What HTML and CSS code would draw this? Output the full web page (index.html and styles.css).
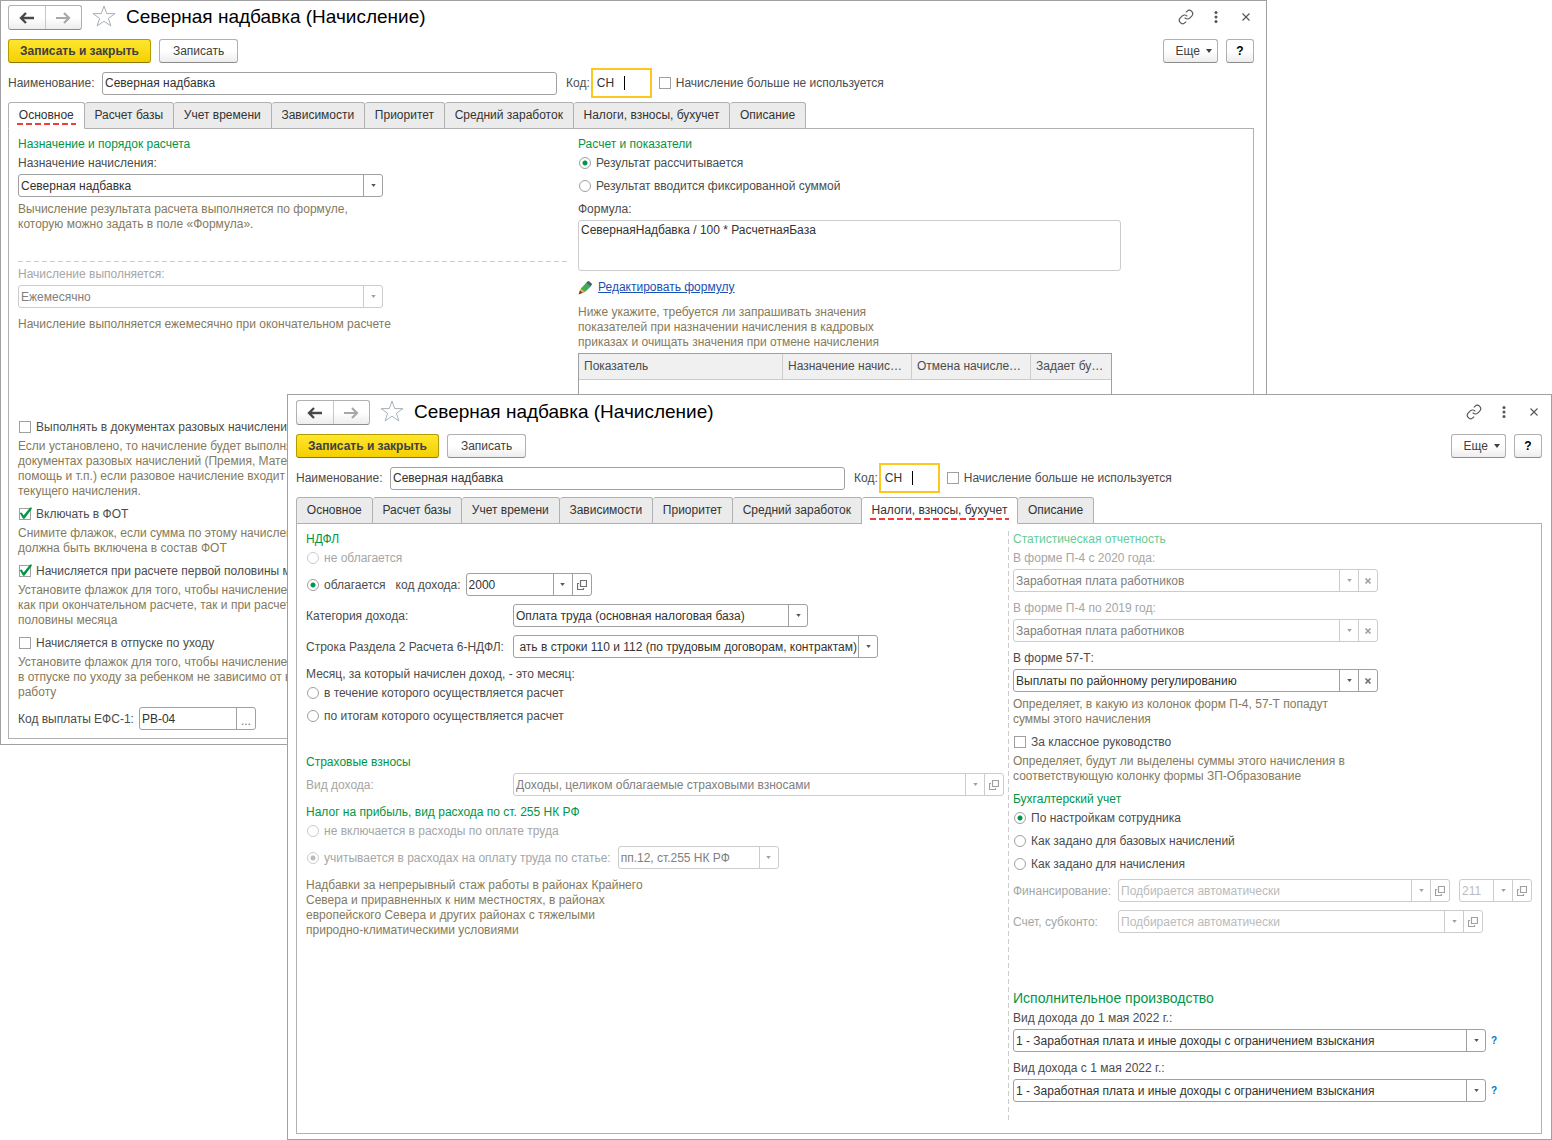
FILE: index.html
```html
<!DOCTYPE html>
<html lang="ru">
<head>
<meta charset="utf-8">
<meta name="viewport" content="width=device-width, initial-scale=1">
<title>Северная надбавка (Начисление)</title>
<link rel="stylesheet" href="styles.css">
</head>
<body>
<svg class="sprite" aria-hidden="true">
  <symbol id="i-back" viewBox="0 0 16 12"><path d="M7 1 2 6l5 5M2 6h13" fill="none" stroke="currentColor" stroke-width="2.4"/></symbol>
  <symbol id="i-forward" viewBox="0 0 16 12"><path d="m9 1 5 5-5 5M14 6H1" fill="none" stroke="currentColor" stroke-width="2.200"/></symbol>
  <symbol id="i-star" viewBox="0 0 24 22"><path d="m12 1 2.700 7.600h8.300l-6.600 4.700 2.500 7.700-6.900-4.800-6.900 4.800 2.500-7.700L1 8.600h8.300z" fill="none" stroke="currentColor" stroke-width="1"/></symbol>
  <symbol id="i-link" viewBox="0 0 24 24"><path d="M10 13a5 5 0 0 0 7.540.54l3-3a5 5 0 0 0-7.070-7.070l-1.720 1.710M14 11a5 5 0 0 0-7.540-.54l-3 3a5 5 0 0 0 7.070 7.070l1.710-1.710" fill="none" stroke="currentColor" stroke-width="1.700"/></symbol>
  <symbol id="i-dots" viewBox="0 0 16 16"><g fill="currentColor"><circle cx="8" cy="3.500" r="1.500"/><circle cx="8" cy="8" r="1.500"/><circle cx="8" cy="12.500" r="1.500"/></g></symbol>
  <symbol id="i-close" viewBox="0 0 16 16"><path d="m4.500 4.500 7 7m0-7-7 7" fill="none" stroke="currentColor" stroke-width="1.100"/></symbol>
  <symbol id="i-caret" viewBox="0 0 6 4"><path d="M0 0h6L3 4z" fill="currentColor"/></symbol>
  <symbol id="i-open" viewBox="0 0 10 10"><path d="M3.500.5h6v6h-6zM2 3.500H.5v6h6V8" fill="none" stroke="currentColor" stroke-width="1.200"/></symbol>
  <symbol id="i-clear" viewBox="0 0 8 8"><path d="m1.500 1.500 5 5m0-5-5 5" fill="none" stroke="currentColor" stroke-width="1.700"/></symbol>
  <symbol id="i-pencil" viewBox="0 0 14 14"><path d="m.5 13.500 1.500-4.500L5.500 11.500z" fill="#5b4632"/><path d="m1.700 9.300 1.500-2.300 4 3.600-2.200 1.700z" fill="#f0a848"/><path d="m2.800 7.500 5.700-6 4.300 4L7 11z" fill="#3fae5a"/><path d="m8.300 1.700 1.500-1.400q.7-.5 1.500.1l2.300 2.200q.7.800.1 1.500l-1.300 1.500z" fill="#4b5d6b"/></symbol>
</svg>

<main class="desktop">

  <section class="window window--back" aria-label="Северная надбавка, основное">
    <header class="titlebar">
      <div class="nav">
        <button class="nav__button" type="button" aria-label="Назад"><svg width="16" height="12"><use href="#i-back"/></svg></button>
        <button class="nav__button nav__button--off" type="button" aria-label="Вперед"><svg width="16" height="12"><use href="#i-forward"/></svg></button>
      </div>
      <button class="icon-button icon-button--star" type="button" aria-label="В избранное"><svg width="24" height="22"><use href="#i-star"/></svg></button>
      <h1 class="titlebar__title">Северная надбавка (Начисление)</h1>
      <div class="titlebar__tools">
        <button class="icon-button" type="button" aria-label="Ссылка"><svg width="16" height="16"><use href="#i-link"/></svg></button>
        <button class="icon-button" type="button" aria-label="Меню"><svg width="16" height="16"><use href="#i-dots"/></svg></button>
        <button class="icon-button" type="button" aria-label="Закрыть"><svg width="16" height="16"><use href="#i-close"/></svg></button>
      </div>
    </header>
    <div class="commands">
      <button class="button button--primary" type="button">Записать и закрыть</button>
      <button class="button" type="button">Записать</button>
      <span class="commands__space"></span>
      <button class="button button--more" type="button">Еще <svg width="6" height="4"><use href="#i-caret"/></svg></button>
      <button class="button button--help" type="button">?</button>
    </div>
    <div class="identity">
      <label class="identity__label" for="b-name">Наименование:</label>
      <input class="text-field identity__name" id="b-name" type="text" value="Северная надбавка">
      <label for="b-code">Код:</label>
      <span class="code"><input class="code__input" id="b-code" type="text" value="СН"><span class="code__caret"></span></span>
      <label class="choice"><input type="checkbox">Начисление больше не используется</label>
    </div>
    <nav class="tabs">
      <button class="tab tab--active" type="button"><span class="tab__text">Основное</span></button>
      <button class="tab" type="button">Расчет базы</button>
      <button class="tab" type="button">Учет времени</button>
      <button class="tab" type="button">Зависимости</button>
      <button class="tab" type="button">Приоритет</button>
      <button class="tab" type="button">Средний заработок</button>
      <button class="tab" type="button">Налоги, взносы, бухучет</button>
      <button class="tab" type="button">Описание</button>
    </nav>
    <div class="panel panel--main">
      <div class="stack">
        <h2 class="heading">Назначение и порядок расчета</h2>
        <label class="near" for="b-purpose">Назначение начисления:</label>
        <div class="combo combo--medium near"><select id="b-purpose"><option>Северная надбавка</option></select><span class="combo__cell combo__cell--caret"><svg width="6" height="4"><use href="#i-caret"/></svg></span></div>
        <p class="hint near">Вычисление результата расчета выполняется по формуле,<br>которую можно задать в поле «Формула».</p>
        <hr class="divider">
        <label class="near muted" for="b-period">Начисление выполняется:</label>
        <div class="combo combo--medium combo--off near"><select id="b-period" disabled><option>Ежемесячно</option></select><span class="combo__cell combo__cell--caret"><svg width="6" height="4"><use href="#i-caret"/></svg></span></div>
        <p class="hint">Начисление выполняется ежемесячно при окончательном расчете</p>
        <label class="choice choice--spaced"><input type="checkbox">Выполнять в документах разовых начислений</label>
        <p class="hint near">Если установлено, то начисление будет выполняться в<br>документах разовых начислений (Премия, Материальная<br>помощь и т.п.) если разовое начисление входит в базу<br>текущего начисления.</p>
        <label class="choice"><input type="checkbox" checked>Включать в ФОТ</label>
        <p class="hint near">Снимите флажок, если сумма по этому начислению не<br>должна быть включена в состав ФОТ</p>
        <label class="choice"><input type="checkbox" checked>Начисляется при расчете первой половины месяца</label>
        <p class="hint near">Установите флажок для того, чтобы начисление выполнялось<br>как при окончательном расчете, так и при расчете первой<br>половины месяца</p>
        <label class="choice"><input type="checkbox">Начисляется в отпуске по уходу</label>
        <p class="hint near">Установите флажок для того, чтобы начисление выполнялось<br>в отпуске по уходу за ребенком не зависимо от выхода на<br>работу</p>
        <div class="row">
          <label for="b-efs">Код выплаты ЕФС-1:</label>
          <div class="combo combo--code"><input id="b-efs" type="text" value="РВ-04"><button class="combo__cell combo__cell--dots" type="button" aria-label="Выбрать">...</button></div>
        </div>
      </div>
      <div class="stack">
        <h2 class="heading">Расчет и показатели</h2>
        <label class="choice near"><input type="radio" name="b-result" checked>Результат рассчитывается</label>
        <label class="choice"><input type="radio" name="b-result">Результат вводится фиксированной суммой</label>
        <label for="b-formula">Формула:</label>
        <textarea class="formula near" id="b-formula">СевернаяНадбавка / 100 * РасчетнаяБаза</textarea>
        <div class="edit"><svg width="14" height="14"><use href="#i-pencil"/></svg><a class="edit__link" href="#formula">Редактировать формулу</a></div>
        <p class="hint">Ниже укажите, требуется ли запрашивать значения<br>показателей при назначении начисления в кадровых<br>приказах и очищать значения при отмене начисления</p>
        <table class="grid near">
          <thead><tr><th class="grid__name">Показатель</th><th class="grid__assign">Назначение начисления</th><th class="grid__cancel">Отмена начисления</th><th>Задает бухучет</th></tr></thead>
          <tbody><tr><td></td><td></td><td></td><td></td></tr></tbody>
        </table>
      </div>
    </div>
  </section>

  <section class="window window--front" aria-label="Северная надбавка, налоги, взносы, бухучет">
    <header class="titlebar">
      <div class="nav">
        <button class="nav__button" type="button" aria-label="Назад"><svg width="16" height="12"><use href="#i-back"/></svg></button>
        <button class="nav__button nav__button--off" type="button" aria-label="Вперед"><svg width="16" height="12"><use href="#i-forward"/></svg></button>
      </div>
      <button class="icon-button icon-button--star" type="button" aria-label="В избранное"><svg width="24" height="22"><use href="#i-star"/></svg></button>
      <h1 class="titlebar__title">Северная надбавка (Начисление)</h1>
      <div class="titlebar__tools">
        <button class="icon-button" type="button" aria-label="Ссылка"><svg width="16" height="16"><use href="#i-link"/></svg></button>
        <button class="icon-button" type="button" aria-label="Меню"><svg width="16" height="16"><use href="#i-dots"/></svg></button>
        <button class="icon-button" type="button" aria-label="Закрыть"><svg width="16" height="16"><use href="#i-close"/></svg></button>
      </div>
    </header>
    <div class="commands">
      <button class="button button--primary" type="button">Записать и закрыть</button>
      <button class="button" type="button">Записать</button>
      <span class="commands__space"></span>
      <button class="button button--more" type="button">Еще <svg width="6" height="4"><use href="#i-caret"/></svg></button>
      <button class="button button--help" type="button">?</button>
    </div>
    <div class="identity">
      <label class="identity__label" for="f-name">Наименование:</label>
      <input class="text-field identity__name" id="f-name" type="text" value="Северная надбавка">
      <label for="f-code">Код:</label>
      <span class="code"><input class="code__input" id="f-code" type="text" value="СН"><span class="code__caret"></span></span>
      <label class="choice"><input type="checkbox">Начисление больше не используется</label>
    </div>
    <nav class="tabs">
      <button class="tab" type="button">Основное</button>
      <button class="tab" type="button">Расчет базы</button>
      <button class="tab" type="button">Учет времени</button>
      <button class="tab" type="button">Зависимости</button>
      <button class="tab" type="button">Приоритет</button>
      <button class="tab" type="button">Средний заработок</button>
      <button class="tab tab--active" type="button"><span class="tab__text">Налоги, взносы, бухучет</span></button>
      <button class="tab" type="button">Описание</button>
    </nav>
    <div class="panel panel--taxes">
      <div class="stack">
        <h2 class="heading">НДФЛ</h2>
        <label class="choice choice--off near"><input type="radio" name="f-ndfl" disabled>не облагается</label>
        <div class="row">
          <label class="choice"><input type="radio" name="f-ndfl" checked>облагается</label>
          <label class="row__after" for="f-income">код дохода:</label>
          <div class="combo combo--income"><select id="f-income"><option>2000</option></select><span class="combo__cell combo__cell--caret"><svg width="6" height="4"><use href="#i-caret"/></svg></span><button class="combo__cell" type="button" aria-label="Открыть"><svg width="10" height="10"><use href="#i-open"/></svg></button></div>
        </div>
        <div class="row">
          <label class="row__label" for="f-category">Категория дохода:</label>
          <div class="combo combo--category"><select id="f-category"><option>Оплата труда (основная налоговая база)</option></select><span class="combo__cell combo__cell--caret"><svg width="6" height="4"><use href="#i-caret"/></svg></span></div>
        </div>
        <div class="row">
          <label class="row__label" for="f-line">Строка Раздела 2 Расчета 6-НДФЛ:</label>
          <div class="combo combo--medium combo--tail"><select id="f-line"><option>ать в строки 110 и 112 (по трудовым договорам, контрактам)&lrm;</option></select><span class="combo__cell combo__cell--caret"><svg width="6" height="4"><use href="#i-caret"/></svg></span></div>
        </div>
        <p>Месяц, за который начислен доход, - это месяц:</p>
        <label class="choice near"><input type="radio" name="f-month">в течение которого осуществляется расчет</label>
        <label class="choice"><input type="radio" name="f-month">по итогам которого осуществляется расчет</label>
        <h2 class="heading heading--insurance">Страховые взносы</h2>
        <div class="row near">
          <label class="row__label muted" for="f-kind">Вид дохода:</label>
          <div class="combo combo--off combo--fill"><select id="f-kind" disabled><option>Доходы, целиком облагаемые страховыми взносами</option></select><span class="combo__cell combo__cell--caret"><svg width="6" height="4"><use href="#i-caret"/></svg></span><button class="combo__cell" type="button" aria-label="Открыть" disabled><svg width="10" height="10"><use href="#i-open"/></svg></button></div>
        </div>
        <h2 class="heading">Налог на прибыль, вид расхода по ст. 255 НК РФ</h2>
        <label class="choice choice--off near"><input type="radio" name="f-profit" disabled>не включается в расходы по оплате труда</label>
        <div class="row row--wide">
          <label class="choice choice--off"><input type="radio" name="f-profit" checked disabled>учитывается в расходах на оплату труда по статье:</label>
          <div class="combo combo--off combo--article"><select aria-label="Статья" disabled><option>пп.12, ст.255 НК РФ</option></select><span class="combo__cell combo__cell--caret"><svg width="6" height="4"><use href="#i-caret"/></svg></span></div>
        </div>
        <p class="hint">Надбавки за непрерывный стаж работы в районах Крайнего<br>Севера и приравненных к ним местностях, в районах<br>европейского Севера и других районах с тяжелыми<br>природно-климатическими условиями</p>
      </div>
      <div class="stack stack--ruled">
        <h2 class="heading heading--off">Статистическая отчетность</h2>
        <label class="near muted" for="f-p4new">В форме П-4 с 2020 года:</label>
        <div class="combo combo--medium combo--off near"><select id="f-p4new" disabled><option>Заработная плата работников</option></select><span class="combo__cell combo__cell--caret"><svg width="6" height="4"><use href="#i-caret"/></svg></span><button class="combo__cell" type="button" aria-label="Очистить" disabled><svg width="8" height="8"><use href="#i-clear"/></svg></button></div>
        <label class="muted" for="f-p4old">В форме П-4 по 2019 год:</label>
        <div class="combo combo--medium combo--off near"><select id="f-p4old" disabled><option>Заработная плата работников</option></select><span class="combo__cell combo__cell--caret"><svg width="6" height="4"><use href="#i-caret"/></svg></span><button class="combo__cell" type="button" aria-label="Очистить" disabled><svg width="8" height="8"><use href="#i-clear"/></svg></button></div>
        <label for="f-57t">В форме 57-Т:</label>
        <div class="combo combo--medium near"><select id="f-57t"><option>Выплаты по районному регулированию</option></select><span class="combo__cell combo__cell--caret"><svg width="6" height="4"><use href="#i-caret"/></svg></span><button class="combo__cell" type="button" aria-label="Очистить"><svg width="8" height="8"><use href="#i-clear"/></svg></button></div>
        <p class="hint near">Определяет, в какую из колонок форм П-4, 57-Т попадут<br>суммы этого начисления</p>
        <label class="choice"><input type="checkbox">За классное руководство</label>
        <p class="hint near">Определяет, будут ли выделены суммы этого начисления в<br>соответствующую колонку формы ЗП-Образование</p>
        <h2 class="heading">Бухгалтерский учет</h2>
        <label class="choice near"><input type="radio" name="f-account" checked>По настройкам сотрудника</label>
        <label class="choice"><input type="radio" name="f-account">Как задано для базовых начислений</label>
        <label class="choice"><input type="radio" name="f-account">Как задано для начисления</label>
        <div class="row">
          <label class="row__short muted" for="f-finance">Финансирование:</label>
          <div class="combo combo--off combo--empty combo--finance"><select id="f-finance" disabled><option>Подбирается автоматически</option></select><span class="combo__cell combo__cell--caret"><svg width="6" height="4"><use href="#i-caret"/></svg></span><button class="combo__cell" type="button" aria-label="Открыть" disabled><svg width="10" height="10"><use href="#i-open"/></svg></button></div>
          <div class="combo combo--off combo--empty combo--item"><select aria-label="Статья расходов" disabled><option>211</option></select><span class="combo__cell combo__cell--caret"><svg width="6" height="4"><use href="#i-caret"/></svg></span><button class="combo__cell" type="button" aria-label="Открыть" disabled><svg width="10" height="10"><use href="#i-open"/></svg></button></div>
        </div>
        <div class="row">
          <label class="row__short muted" for="f-ledger">Счет, субконто:</label>
          <div class="combo combo--off combo--empty combo--medium"><select id="f-ledger" disabled><option>Подбирается автоматически</option></select><span class="combo__cell combo__cell--caret"><svg width="6" height="4"><use href="#i-caret"/></svg></span><button class="combo__cell" type="button" aria-label="Открыть" disabled><svg width="10" height="10"><use href="#i-open"/></svg></button></div>
        </div>
        <h2 class="heading heading--large">Исполнительное производство</h2>
        <label class="near" for="f-before">Вид дохода до 1 мая 2022 г.:</label>
        <div class="row near">
          <div class="combo combo--long"><select id="f-before"><option>1 - Заработная плата и иные доходы с ограничением взыскания</option></select><span class="combo__cell combo__cell--caret"><svg width="6" height="4"><use href="#i-caret"/></svg></span></div>
          <a class="help-link" href="#help">?</a>
        </div>
        <label for="f-since">Вид дохода с 1 мая 2022 г.:</label>
        <div class="row near">
          <div class="combo combo--long"><select id="f-since"><option>1 - Заработная плата и иные доходы с ограничением взыскания</option></select><span class="combo__cell combo__cell--caret"><svg width="6" height="4"><use href="#i-caret"/></svg></span></div>
          <a class="help-link" href="#help">?</a>
        </div>
      </div>
    </div>
  </section>

</main>
</body>
</html>
```

FILE: styles.css
```css
:root {
  --text: #4c4c4c;
  --value: #333333;
  --muted: #a6a6a6;
  --hint: #857a5c;
  --green: #009646;
  --line: #a0a0a0;
  --line-off: #cccccc;
}

* { box-sizing: border-box; }

body {
  margin: 0;
  background: #ffffff;
  color: var(--text);
  font: 12px/15px "Liberation Sans", Arial, sans-serif;
}

h1, h2, p { margin: 0; font-weight: normal; }

button, input, select, textarea { font: inherit; color: inherit; margin: 0; }

svg { display: block; flex: none; }

.sprite { position: absolute; width: 0; height: 0; }

/* Overlapping windows share one grid cell; margins cascade them. */
.desktop { display: grid; }

.window {
  grid-area: 1 / 1;
  align-self: start;
  min-width: 0;
  border: 1px solid var(--line);
  background: #ffffff;
}

.window--back { margin-right: 285px; padding: 4px 12px 5px 7px; }
.window--front { z-index: 1; margin: 394px 0 0 287px; padding: 5px 9px 5px 8px; }

/* Title bar */
.titlebar { display: flex; align-items: flex-start; height: 25px; }

.nav {
  display: flex;
  width: 74px;
  height: 25px;
  border: 1px solid #b0b0b0;
  border-bottom-color: #8c8c8c;
  border-radius: 3px;
  background: linear-gradient(#ffffff 50%, #ededed);
}

.nav__button {
  display: grid;
  flex: 1;
  place-items: center;
  padding: 0;
  border: 0;
  background: none;
  color: #484848;
}

.nav__button--off { border-left: 1px solid #c8c8c8; color: #a8a8a8; }

.icon-button { padding: 0; border: 0; background: none; color: #555555; }
.icon-button--star { margin: 0 10px; color: #a8b0b8; }

.titlebar__title { color: #000000; font-size: 19px; line-height: 23px; white-space: nowrap; }
.titlebar__tools { display: flex; align-items: center; gap: 14px; height: 23px; margin-left: auto; }

/* Command bar */
.commands { display: flex; gap: 8px; margin-top: 9px; }
.commands__space { flex: 1; }

.button {
  height: 24px;
  padding: 0 13px;
  border: 1px solid #b0b0b0;
  border-bottom-color: #8c8c8c;
  border-radius: 3px;
  background: linear-gradient(#ffffff 50%, #ededed);
  color: #404040;
  white-space: nowrap;
}

.button--primary {
  padding: 0 11px;
  border-color: #b39b00;
  border-bottom-color: #8c7a00;
  background: linear-gradient(#ffe62e, #f5d000);
  font-weight: bold;
}

.button--more { display: flex; align-items: center; gap: 6px; padding: 0 5px 0 12px; }
.button--help { width: 28px; padding: 0; color: #000000; font-weight: bold; }

/* Name and code */
.identity { display: flex; align-items: center; margin-top: 5px; white-space: nowrap; }
.identity__label { width: 94px; }

.text-field {
  height: 23px;
  padding: 0 2px;
  border: 1px solid var(--line);
  border-radius: 3px;
  color: var(--value);
}

.identity__name { flex: 0 1 455px; min-width: 0; margin-right: 9px; }

.code { position: relative; width: 61px; margin: 0 6px 0 1px; }

.code__input {
  display: block;
  width: 100%;
  height: 30px;
  padding: 0 4px;
  border: 2px solid #fcc81e;
  outline: 0;
  color: var(--value);
}

.code__caret { position: absolute; top: 8px; left: 33px; width: 1px; height: 14px; background: #000000; }

/* Tabs */
.tabs { display: flex; max-width: 798px; margin: 4px 0 -1px; }

.tab {
  flex: 1 0 auto;
  height: 27px;
  padding: 0 9px;
  border: 1px solid #b0b0b0;
  border-left-width: 0;
  border-radius: 3px 3px 0 0;
  background: #ebebeb;
  color: var(--value);
  white-space: nowrap;
}

.tab:first-child { border-left-width: 1px; }
.tab--active { border-bottom-color: #ffffff; background: #ffffff; }
.tab__text { position: relative; }

.tab__text::after {
  position: absolute;
  right: -2px;
  bottom: -3px;
  left: -2px;
  height: 2px;
  background: repeating-linear-gradient(90deg, #f03c3c 0 6px, transparent 6px 9px);
  content: "";
}

/* Tab page */
.panel { display: grid; border: 1px solid #b0b0b0; }

.panel--main { grid-template-columns: minmax(0, 550px) minmax(0, 1fr); gap: 10px; padding: 7px 9px 8px; }
.panel--taxes { grid-template-columns: minmax(0, 698px) minmax(0, 1fr); gap: 4px; padding: 7px 9px 11px; }

.stack { display: flex; flex-direction: column; min-width: 0; white-space: nowrap; }
.stack > * + * { margin-top: 8px; }
.stack > .near { margin-top: 4px; }

/* Text sits low in its line, level with the boxes beside it. */
.stack > label, .stack > p, .stack > h2 { padding-top: 1px; margin-bottom: -1px; }

.stack--ruled {
  padding: 0 0 20px 5px;
  background: repeating-linear-gradient(#cccccc 0 5px, transparent 5px 8px) left / 1px 100% no-repeat;
}

.heading { color: var(--green); font-size: 12px; }
.heading--off { color: #66cc94; }
.stack > .heading--insurance { margin-top: 31px; }
.stack > .heading--large { margin-top: 56px; font-size: 14px; line-height: 17px; }

.hint { color: var(--hint); }
.muted { color: var(--muted); }

.stack > .divider {
  width: 100%;
  height: 1px;
  margin: 30px 0 0;
  border: 0;
  background: repeating-linear-gradient(90deg, #cccccc 0 5px, transparent 5px 8px);
}

.row { display: flex; align-items: center; gap: 5px; }
.row > label { padding-top: 1px; }
.row__label { flex: none; width: 202px; }
.row__short { flex: none; width: 100px; }
.row__after { margin-left: 5px; }
.row--wide { gap: 7px; }

/* Tick boxes and radios */
.choice { display: flex; align-items: center; gap: 5px; }
.choice--off { color: var(--muted); }
.stack > .choice--spaced { margin-top: 88px; }

.choice input {
  position: relative;
  flex: none;
  width: 12px;
  height: 12px;
  margin: 0 0 1px 1px;
  border: 1px solid var(--line);
  background: #ffffff;
  appearance: none;
}

.choice input[type="radio"] { border-radius: 50%; }
.choice input[type="radio"]:checked { background: radial-gradient(circle, var(--green) 2px, transparent 3px); }
.choice input:disabled { border-color: var(--line-off); }
.choice input[type="radio"]:checked:disabled { background: radial-gradient(circle, #bbbbbb 2px, transparent 3px); }

.choice input[type="checkbox"]:checked::before {
  position: absolute;
  inset: -2px;
  background: var(--green);
  clip-path: polygon(12% 42%, 26% 40%, 40% 60%, 86% 4%, 98% 4%, 98% 14%, 46% 84%, 36% 84%);
  content: "";
}

/* Combo boxes */
.combo {
  display: grid;
  grid-template-columns: minmax(0, 1fr) auto auto;
  height: 23px;
  min-width: 0;
  border: 1px solid var(--line);
  border-radius: 3px;
  color: var(--value);
}

.combo select, .combo > input {
  grid-row: 1;
  grid-column: 1 / 3;
  width: 100%;
  min-width: 0;
  height: 21px;
  padding: 1px 19px 0 2px;
  border: 0;
  border-radius: 3px;
  background: none;
  appearance: none;
  opacity: 1;
}

.combo > input { grid-column: 1; padding: 0 0 0 2px; }

.combo__cell {
  display: grid;
  grid-row: 1;
  place-items: center;
  width: 19px;
  height: 21px;
  padding: 0;
  border: 0;
  border-left: 1px solid var(--line);
  background: none;
  color: #707070;
}

.combo__cell--caret { grid-column: 2; color: #555555; pointer-events: none; }
.combo__cell--caret svg { width: 5px; height: 3px; }
.combo__cell--dots { place-items: end center; }

.combo--off { border-color: var(--line-off); color: #808080; }
.combo--off .combo__cell { border-color: var(--line-off); color: #a0a0a0; }
.combo--empty { color: #bbbbbb; }

/* A value longer than its box shows its end. */
.combo--tail select { padding: 1px 20px 0 0; direction: rtl; }

.combo--medium { width: 365px; }
.combo--code { width: 117px; }
.combo--income { width: 126px; }
.combo--category { width: 295px; }
.combo--article { width: 161px; }
.combo--finance { width: 332px; margin-right: 4px; }
.combo--item { width: 73px; }
.combo--long { width: 473px; }
.combo--fill { flex: 1; }

.help-link { color: #0078c8; font-size: 10px; font-weight: bold; text-decoration: none; }

/* Formula */
.formula {
  width: 100%;
  max-width: 543px;
  height: 51px;
  padding: 2px;
  border: 1px solid var(--line-off);
  border-radius: 3px;
  color: var(--value);
  resize: none;
}

.edit { display: flex; align-items: center; gap: 6px; height: 17px; }
.edit__link { color: #1a4fb4; }

/* Indicators table */
.grid {
  width: 100%;
  max-width: 534px;
  border: 1px solid var(--line);
  border-collapse: separate;
  border-spacing: 0;
  table-layout: fixed;
}

.grid th {
  height: 26px;
  padding: 0 3px 0 5px;
  overflow: hidden;
  border-right: 1px solid var(--line-off);
  border-bottom: 1px solid var(--line-off);
  background: #f0f0f0;
  font-weight: normal;
  text-align: left;
  text-overflow: ellipsis;
}

.grid th:last-child { border-right: 0; }
.grid td { height: 60px; }
.grid .grid__name { width: 204px; }
.grid .grid__assign { width: 129px; }
.grid .grid__cancel { width: 119px; padding-right: 8px; }
```
